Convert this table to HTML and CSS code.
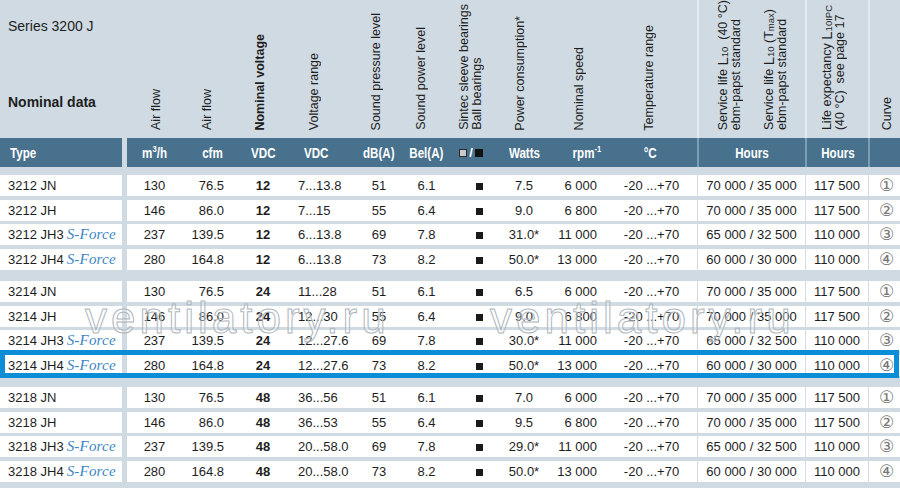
FILE: index.html
```html
<!DOCTYPE html>
<html>
<head>
<meta charset="utf-8">
<link rel="stylesheet" href="styles.css">
</head>
<body>
<div class="sheet">
  <div class="labels">
    <div class="intro">
      <div class="series">Series 3200 J</div>
      <div class="nominal">Nominal data</div>
    </div>
    <div class="cols lcols">
      <div><span class="vt">Air flow</span></div>
      <div><span class="vt">Air flow</span></div>
      <div><span class="vt b">Nominal voltage</span></div>
      <div><span class="vt">Voltage range</span></div>
      <div><span class="vt">Sound pressure level</span></div>
      <div><span class="vt">Sound power level</span></div>
      <div><span class="vt">Sintec sleeve bearings<br>Ball bearings</span></div>
      <div><span class="vt">Power consumption*</span></div>
      <div><span class="vt">Nominal speed</span></div>
      <div><span class="vt">Temperature range</span></div>
      <div><div class="sl"><span class="vt">Service life <span class="bigL">L</span><sub>10</sub>&nbsp; (40 °C)<br>ebm-papst standard</span><span class="vt">Service life <span class="bigL">L</span><sub>10</sub> (T<sub>max</sub>)<br>ebm-papst standard</span></div></div>
      <div><span class="vt">Life expectancy <span class="bigL">L</span><sub>10IPC</sub><br>(40 °C)&nbsp; see page 17</span></div>
      <div><span class="vt">Curve</span></div>
    </div>
  </div>

  <div class="bar">
    <div class="type"><span class="t">Type</span></div>
    <div class="cols">
      <div><span class="t">m<sup>3</sup>/h</span></div>
      <div><span class="t">cfm</span></div>
      <div><span class="t">VDC</span></div>
      <div><span class="t">VDC</span></div>
      <div><span class="t">dB(A)</span></div>
      <div><span class="t">Bel(A)</span></div>
      <div><span class="sq-l"></span><span class="slash">/</span><span class="sq-d"></span></div>
      <div><span class="t">Watts</span></div>
      <div><span class="t">rpm<sup>-1</sup></span></div>
      <div><span class="t">°C</span></div>
      <div><span class="t">Hours</span></div>
      <div><span class="t">Hours</span></div>
      <div></div>
    </div>
  </div>

  <div class="group">
    <div class="row"><div class="type">3212 JN</div><div class="cols"><div>130</div><div>76.5</div><div>12</div><div>7...13.8</div><div>51</div><div>6.1</div><div><span class="sq"></span></div><div>7.5</div><div>6 000</div><div>-20 ...+70</div><div>70 000 / 35 000</div><div>117 500</div><div><span class="cv">①</span></div></div></div>
    <div class="row"><div class="type">3212 JH</div><div class="cols"><div>146</div><div>86.0</div><div>12</div><div>7...15</div><div>55</div><div>6.4</div><div><span class="sq"></span></div><div>9.0</div><div>6 800</div><div>-20 ...+70</div><div>70 000 / 35 000</div><div>117 500</div><div><span class="cv">②</span></div></div></div>
    <div class="row"><div class="type">3212 JH3<span class="sf">S-Force</span></div><div class="cols"><div>237</div><div>139.5</div><div>12</div><div>6...13.8</div><div>69</div><div>7.8</div><div><span class="sq"></span></div><div>31.0*</div><div>11 000</div><div>-20 ...+70</div><div>65 000 / 32 500</div><div>110 000</div><div><span class="cv">③</span></div></div></div>
    <div class="row"><div class="type">3212 JH4<span class="sf">S-Force</span></div><div class="cols"><div>280</div><div>164.8</div><div>12</div><div>6...13.8</div><div>73</div><div>8.2</div><div><span class="sq"></span></div><div>50.0*</div><div>13 000</div><div>-20 ...+70</div><div>60 000 / 30 000</div><div>110 000</div><div><span class="cv">④</span></div></div></div>
  </div>

  <div class="group">
    <div class="row"><div class="type">3214 JN</div><div class="cols"><div>130</div><div>76.5</div><div>24</div><div>11...28</div><div>51</div><div>6.1</div><div><span class="sq"></span></div><div>6.5</div><div>6 000</div><div>-20 ...+70</div><div>70 000 / 35 000</div><div>117 500</div><div><span class="cv">①</span></div></div></div>
    <div class="row"><div class="type">3214 JH</div><div class="cols"><div>146</div><div>86.0</div><div>24</div><div>12...30</div><div>55</div><div>6.4</div><div><span class="sq"></span></div><div>9.0</div><div>6 800</div><div>-20 ...+70</div><div>70 000 / 35 000</div><div>117 500</div><div><span class="cv">②</span></div></div></div>
    <div class="row"><div class="type">3214 JH3<span class="sf">S-Force</span></div><div class="cols"><div>237</div><div>139.5</div><div>24</div><div>12...27.6</div><div>69</div><div>7.8</div><div><span class="sq"></span></div><div>30.0*</div><div>11 000</div><div>-20 ...+70</div><div>65 000 / 32 500</div><div>110 000</div><div><span class="cv">③</span></div></div></div>
    <div class="row hl"><div class="type">3214 JH4<span class="sf">S-Force</span></div><div class="cols"><div>280</div><div>164.8</div><div>24</div><div>12...27.6</div><div>73</div><div>8.2</div><div><span class="sq"></span></div><div>50.0*</div><div>13 000</div><div>-20 ...+70</div><div>60 000 / 30 000</div><div>110 000</div><div><span class="cv">④</span></div></div></div>
  </div>

  <div class="group">
    <div class="row"><div class="type">3218 JN</div><div class="cols"><div>130</div><div>76.5</div><div>48</div><div>36...56</div><div>51</div><div>6.1</div><div><span class="sq"></span></div><div>7.0</div><div>6 000</div><div>-20 ...+70</div><div>70 000 / 35 000</div><div>117 500</div><div><span class="cv">①</span></div></div></div>
    <div class="row"><div class="type">3218 JH</div><div class="cols"><div>146</div><div>86.0</div><div>48</div><div>36...53</div><div>55</div><div>6.4</div><div><span class="sq"></span></div><div>9.5</div><div>6 800</div><div>-20 ...+70</div><div>70 000 / 35 000</div><div>117 500</div><div><span class="cv">②</span></div></div></div>
    <div class="row"><div class="type">3218 JH3<span class="sf">S-Force</span></div><div class="cols"><div>237</div><div>139.5</div><div>48</div><div>20...58.0</div><div>69</div><div>7.8</div><div><span class="sq"></span></div><div>29.0*</div><div>11 000</div><div>-20 ...+70</div><div>65 000 / 32 500</div><div>110 000</div><div><span class="cv">③</span></div></div></div>
    <div class="row"><div class="type">3218 JH4<span class="sf">S-Force</span></div><div class="cols"><div>280</div><div>164.8</div><div>48</div><div>20...58.0</div><div>73</div><div>8.2</div><div><span class="sq"></span></div><div>50.0*</div><div>13 000</div><div>-20 ...+70</div><div>60 000 / 30 000</div><div>110 000</div><div><span class="cv">④</span></div></div></div>
  </div>

  <div class="wm wm1">ventilatory.ru</div>
  <div class="wm wm2">ventilatory.ru</div>
</div>
</body>
</html>
```
FILE: styles.css
```css
body { margin: 0; }

.sheet {
  position: relative;
  width: 900px;
  height: 488px;
  background: #cfdae3;
  font-family: "Liberation Sans", Arial, sans-serif;
  color: #1e1e1e;
  overflow: hidden;
}

/* ---------- header labels ---------- */
.labels { display: flex; height: 138px; }
.intro { width: 127px; box-sizing: border-box; padding: 18px 0 0 8px; flex: none; }
.series { font-size: 14px; line-height: 16px; }
.nominal { font-size: 14px; line-height: 16px; font-weight: bold; margin-top: 60px; }

.cols {
  display: grid;
  width: 773px;
  grid-template-columns: 55px 54px 54px 65px 48px 47px 42px 64px 56px 85px 108px 63px 32px;
}
.cols > div {
  display: flex;
  align-items: center;
  justify-content: center;
  white-space: nowrap;
  box-sizing: border-box;
}

.lcols > div { align-items: flex-end; padding-bottom: 12px; }
.lcols > :nth-child(1) { padding-left: 3px; }
.lcols > :nth-child(2) { padding-right: 4px; }
.lcols > :nth-child(3) { padding-right: 6px; }
.lcols > :nth-child(4) { padding-right: 16px; }
.lcols > :nth-child(5) { padding-right: 6px; }
.lcols > :nth-child(6) { padding-right: 10px; }
.lcols > :nth-child(8) { padding-right: 8px; }
.lcols > :nth-child(9) { padding-right: 10px; }
.lcols > :nth-child(10) { padding-right: 10px; }
.lcols > :nth-child(11),
.lcols > :nth-child(12),
.lcols > :nth-child(13) { border-left: 2px solid #e3e9ee; }
.lcols > :nth-child(12) { padding-right: 8px; }
.lcols > :nth-child(13) { padding-left: 4px; }

.vt {
  writing-mode: vertical-rl;
  transform: rotate(180deg);
  font-size: 12.5px;
  line-height: 13px;
  white-space: nowrap;
}
.vt.b { font-weight: bold; }
.vt sub { font-size: 9.5px; line-height: 0; vertical-align: -2px; }
.bigL { font-size: 15px; }
.sl { display: flex; gap: 19px; align-items: flex-end; }

/* ---------- dark header bar ---------- */
.bar { display: flex; height: 29px; margin-bottom: 8px; }
.bar .type,
.bar .cols {
  background: #47718c;
  color: #fff;
  font-family: "Liberation Sans", sans-serif;
  font-weight: bold;
  font-size: 14.5px;
}
.bar .t { display: inline-block; transform: scaleX(0.8); transform-origin: 50% 50%; }
.bar .type { width: 122px; flex: none; box-sizing: border-box; padding-left: 10px; display: flex; align-items: center; }
.bar .type .t { transform-origin: 0 50%; }
.bar .cols { margin-left: 5px; }
.bar sup { font-size: 9.5px; line-height: 0; vertical-align: 6px; }
.bar .cols > :nth-child(2) { justify-content: flex-end; padding-right: 13px; }
.bar .cols > :nth-child(2) .t { transform-origin: 100% 50%; }
.bar .cols > :nth-child(4) { justify-content: flex-start; padding-left: 14px; }
.bar .cols > :nth-child(4) .t { transform-origin: 0 50%; }
.bar .cols > :nth-child(9) { padding-left: 6px; }
.bar .cols > :nth-child(10) { padding-right: 9px; }
.bar .cols > :nth-child(11),
.bar .cols > :nth-child(12),
.bar .cols > :nth-child(13) { border-left: 2px solid #7e9db1; }

.sq-l { width: 6px; height: 6px; background: #c9c9c9; border: 1px solid #2a2a2a; }
.slash { margin: 0 2px; font-size: 13px; }
.sq-d { width: 8px; height: 8px; background: #111; }

/* ---------- body rows ---------- */
.group { display: flex; flex-direction: column; gap: 3.5px; }
.group + .group { margin-top: 11.5px; }

.row { display: flex; height: 21px; position: relative; font-size: 13px; }
.row .type {
  width: 122px; flex: none; box-sizing: border-box;
  padding-left: 8px; background: #fff;
  display: flex; align-items: center; white-space: nowrap;
}
.row .cols { margin-left: 5px; background: #fff; }
.row .cols > :nth-child(2) { justify-content: flex-end; padding-right: 12px; }
.row .cols > :nth-child(3) { font-weight: bold; }
.row .cols > :nth-child(4) { justify-content: flex-start; padding-left: 8px; }
.row .cols > :nth-child(7) { padding-left: 16px; }
.row .cols > :nth-child(9) { justify-content: flex-end; padding-right: 15px; }
.row .cols > :nth-child(10) { padding-right: 6px; }
.row .cols > :nth-child(11),
.row .cols > :nth-child(12),
.row .cols > :nth-child(13) { border-left: 1px solid #d3dce3; }
.row .cols > :nth-child(13) { padding-left: 4px; }

.sq { width: 7px; height: 7px; background: #1a1a1a; margin-top: 2px; }
.cv { font-family: "DejaVu Sans", sans-serif; font-size: 17px; line-height: 17px; color: #777; }

.sf {
  font-family: "Liberation Serif", serif;
  font-style: italic;
  font-size: 15px;
  color: #3a85c6;
  margin-left: 3px;
  letter-spacing: 0.2px;
}

.row.hl::after {
  content: "";
  position: absolute;
  top: -4.5px; bottom: -2.5px; left: 0; right: 1px;
  border: 5px solid #0b8dd7;
  box-sizing: border-box;
  pointer-events: none;
}

/* ---------- watermark ---------- */
.wm {
  position: absolute;
  top: 296px;
  font-family: "Liberation Sans", sans-serif;
  font-size: 44px;
  line-height: 44px;
  letter-spacing: 4px;
  color: rgba(255, 255, 255, 0.3);
  -webkit-text-stroke: 1px #aeb6bd;
  white-space: nowrap;
  pointer-events: none;
}
.wm1 { left: 85px; }
.wm2 { left: 490px; }
```
